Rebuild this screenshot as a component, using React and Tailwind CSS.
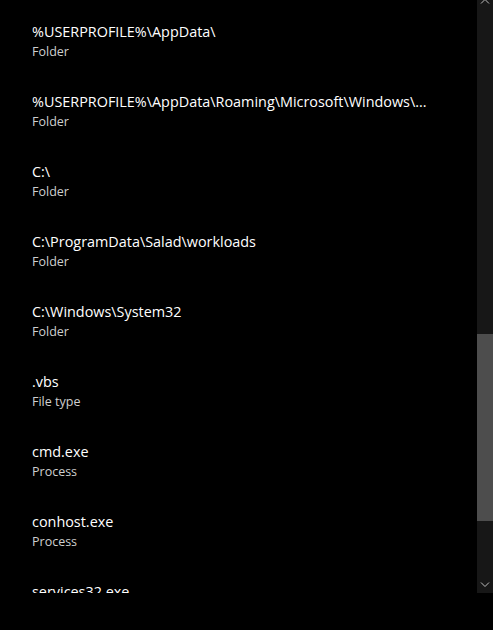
import { useState } from "react";

const items = [
  { name: "%USERPROFILE%\\AppData\\", kind: "Folder" },
  { name: "%USERPROFILE%\\AppData\\Roaming\\Microsoft\\Windows\\...", kind: "Folder" },
  { name: "C:\\", kind: "Folder" },
  { name: "C:\\ProgramData\\Salad\\workloads", kind: "Folder" },
  { name: "C:\\Windows\\System32", kind: "Folder" },
  { name: ".vbs", kind: "File type" },
  { name: "cmd.exe", kind: "Process" },
  { name: "conhost.exe", kind: "Process" },
  { name: "services32.exe", kind: "Process" },
];

export default function App() {
  const [selected] = useState(null);

  return (
    <div className="w-[493px] h-[630px] bg-black text-white overflow-hidden" style={{ fontFamily: "'Open Sans', 'Noto Sans', sans-serif" }}>
      <div className="flex h-[593px]">
        <div className="flex-1 overflow-hidden">
          <ul className="pt-[22px] pl-[32px]">
            {items.map((item) => (
              <li key={item.name} className={`h-[70px] ${selected === item.name ? "bg-white/10" : ""}`}>
                <div className="text-[14.4px] leading-[20px] text-white">{item.name}</div>
                <div className="text-[12.5px] leading-[20px] text-[#cfcfcf]">{item.kind}</div>
              </li>
            ))}
          </ul>
        </div>

        <div className="w-[16px] bg-[#171717] flex flex-col items-center">
          <svg className="w-[10px] h-[6px] -mt-[2px]" viewBox="0 0 10 6" fill="none" stroke="#bdbdbd" strokeWidth="1">
            <path d="M1 5.5 L5 1.5 L9 5.5" />
          </svg>
          <div className="h-[330px]" />
          <div className="w-full h-[187px] bg-[#4d4d4d]" />
          <div className="flex-1" />
          <svg className="w-[10px] h-[6px] mb-[5px]" viewBox="0 0 10 6" fill="none" stroke="#bdbdbd" strokeWidth="1">
            <path d="M1 0.5 L5 4.5 L9 0.5" />
          </svg>
        </div>
      </div>
    </div>
  );
}
